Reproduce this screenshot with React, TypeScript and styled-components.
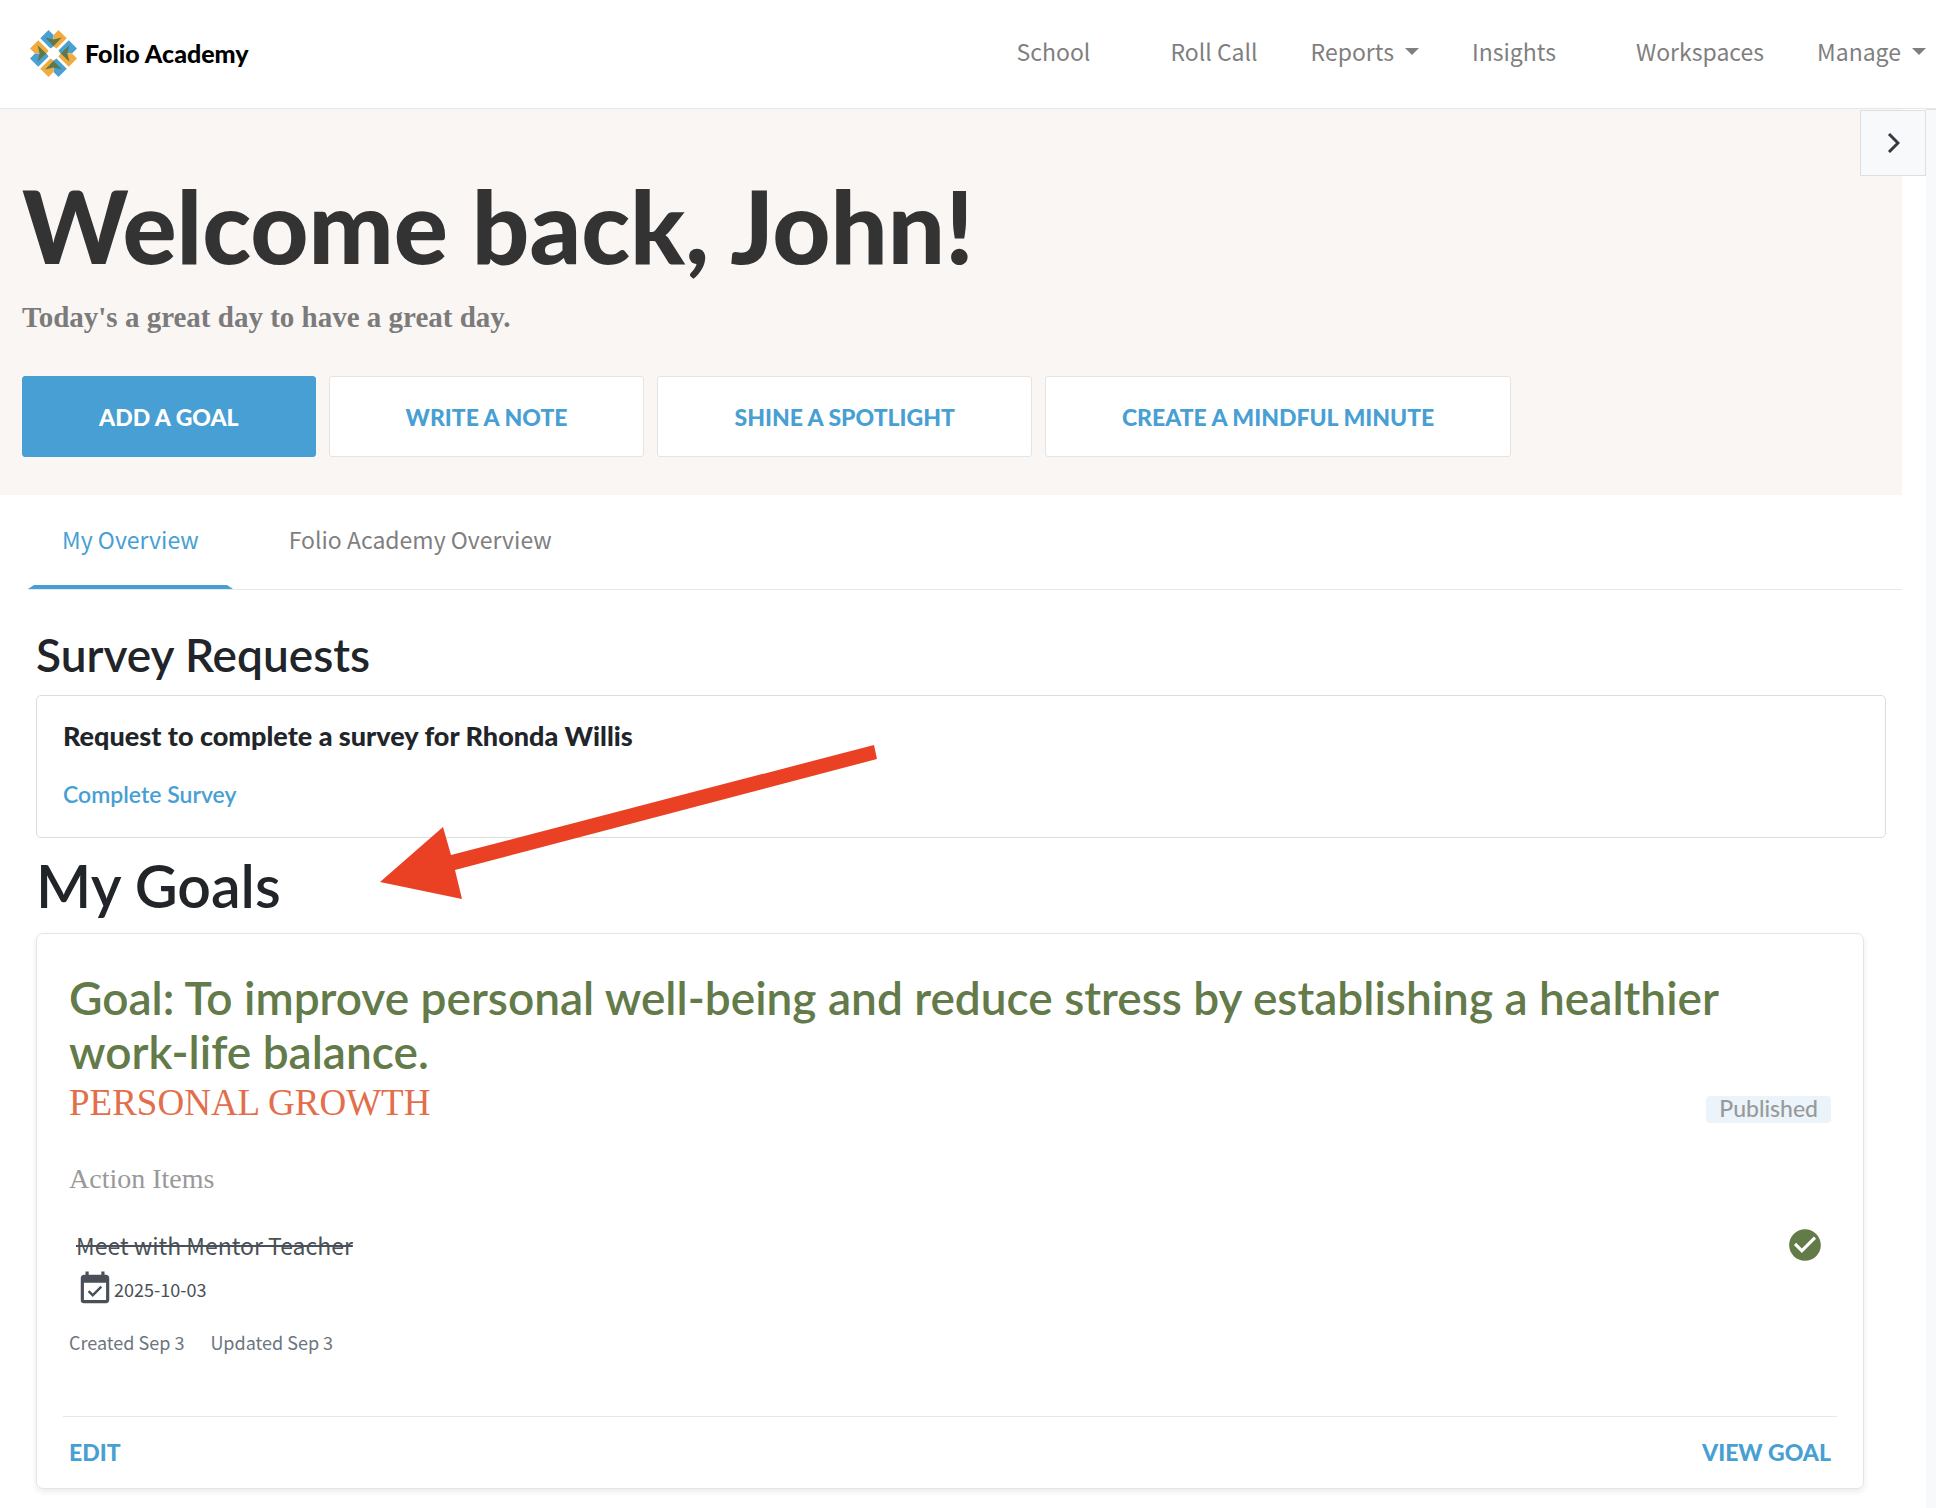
import React from "react";
import styled, { createGlobalStyle, css } from "styled-components";
import { MdCheckCircle, MdEventAvailable } from "react-icons/md";

const color = {
  blue: "#489fd3",
  green: "#637a49",
  orange: "#e26e4c",
  ink: "#212529",
  grey: "#7f7f7f",
  line: "#e6e7e9",
};

const font = {
  ui: "'Noto Sans CJK SC', 'Noto Sans', sans-serif",
  display: "Lato, sans-serif",
  serif: "'Liberation Serif', serif",
};

const GlobalStyle = createGlobalStyle`
  *, *::before, *::after { box-sizing: border-box; }
  body { margin: 0; background: #fff; color: ${color.ink}; font-family: ${font.ui}; }
  h1, h2, h3, p { margin: 0; }
  a { text-decoration: none; }
  button { border: 0; background: none; padding: 0; cursor: pointer; }
  svg { display: block; }
`;

const Page = styled.div`
  display: flex;
  flex-direction: column;
  min-height: 100vh;
`;

const Header = styled.header`
  display: flex;
  align-items: center;
  justify-content: space-between;
  height: 109px;
  padding: 0 10px 2px 30px;
  border-bottom: 1px solid ${color.line};
`;

const Brand = styled.a`
  display: flex;
  align-items: center;
  gap: 8px;
  color: #000;
  font: 900 25px/30px ${font.display};
`;

const Nav = styled.nav`
  display: flex;
  align-items: center;
  gap: 53px;
  padding-bottom: 4px;
`;

const navText = css`
  color: ${color.grey};
  font: 400 23px/34px ${font.ui};
`;

const NavLink = styled.a<{ $wide?: boolean }>`
  ${navText}
  margin-right: ${(p) => (p.$wide ? 27 : 0)}px;
`;

const NavMenu = styled.button`
  ${navText}
  display: flex;
  align-items: center;
  gap: 11px;

  &::after {
    content: "";
    border: 7px solid transparent;
    border-top-color: currentColor;
    border-bottom: 0;
  }
`;

const Body = styled.div`
  position: relative;
  display: flex;
  flex: 1;
`;

const Main = styled.main`
  flex: 1;
  min-width: 0;
  padding: 0 24px 19px 0;
`;

const Rail = styled.aside`
  width: 10px;
  border-top: 1px solid #dee2e6;
  background: #f8f9fb;
`;

const RailToggle = styled.button`
  position: absolute;
  top: 1px;
  right: 10px;
  display: grid;
  place-items: center;
  width: 66px;
  height: 66px;
  border: 1px solid #dbe0e5;
  background: #f8f9fb;
  color: #343a40;
`;

const Hero = styled.section`
  padding: 56px 22px 38px;
  background: #faf6f4;
`;

const Welcome = styled.h1`
  color: #333;
  font: 900 101px/120px ${font.display};
`;

const Tagline = styled.p`
  margin-top: 10px;
  color: #7b7b7b;
  font: 700 29px/44px ${font.serif};
`;

const Actions = styled.div`
  display: flex;
  flex-wrap: wrap;
  gap: 13px;
  margin-top: 37px;
`;

const ActionButton = styled.button<{ $primary?: boolean }>`
  height: 81px;
  padding: 0 76px;
  border: 1px solid ${(p) => (p.$primary ? color.blue : "#e4e4e4")};
  border-radius: 3px;
  background: ${(p) => (p.$primary ? color.blue : "#fff")};
  color: ${(p) => (p.$primary ? "#fff" : color.blue)};
  font: 900 23px/28px ${font.display};
`;

const Tabs = styled.div`
  display: flex;
  gap: 22px;
  margin-left: 28px;
  border-bottom: 1px solid ${color.line};
`;

const Tab = styled.button<{ $active?: boolean }>`
  height: 94px;
  padding: 0 28px 2px;
  border: solid transparent;
  border-width: 0 6px 4px;
  border-bottom-color: ${(p) => (p.$active ? color.blue : "transparent")};
  color: ${(p) => (p.$active ? color.blue : color.grey)};
  font: 400 23px/34px ${font.ui};
`;

const Panel = styled.div`
  display: flex;
  flex-direction: column;
  padding: 37px 16px 0 36px;
`;

const SurveyTitle = styled.h2`
  margin-bottom: 13px;
  font: 600 46px/55px ${font.display};
`;

const GoalsTitle = styled.h2`
  margin: 13px 0 12px;
  font: 600 59px/70px ${font.display};
`;

const SurveyCard = styled.article`
  display: flex;
  flex-direction: column;
  align-items: flex-start;
  gap: 28px;
  padding: 24px 26px 29px;
  border: 1px solid #dcdddf;
  border-radius: 5px;
`;

const SurveyName = styled.h3`
  font: 900 27px/32px ${font.display};
`;

const SurveyLink = styled.a`
  color: ${color.blue};
  font: 600 23px/28px ${font.display};
`;

const GoalCard = styled.article`
  margin-right: 22px;
  padding: 37px 26px 0;
  border: 1px solid #e3e4e5;
  border-radius: 7px;
  box-shadow: 0 3px 6px rgba(0, 0, 0, 0.08);
`;

const GoalBody = styled.div`
  padding: 0 6px 61px;
`;

const GoalTitle = styled.h3`
  color: ${color.green};
  font: 600 46px/54px ${font.display};
`;

const CategoryRow = styled.div`
  display: flex;
  align-items: flex-end;
  justify-content: space-between;
  margin-top: 4px;
`;

const Category = styled.p`
  color: ${color.orange};
  font: 400 37px/40px ${font.serif};
`;

const Status = styled.span`
  padding: 0 13px 3px;
  border-radius: 4px;
  background: #ebf4fa;
  color: #999;
  font: 500 23px/24px ${font.display};
`;

const ItemsLabel = styled.p`
  margin-top: 39px;
  color: #999;
  font: 400 28px/34px ${font.serif};
`;

const Item = styled.div`
  display: flex;
  align-items: center;
  justify-content: space-between;
  height: 38px;
  margin-top: 30px;
  padding: 0 7px;
  color: #495057;
  font-size: 23px;
  line-height: 34px;
`;

const Done = styled.span`
  color: ${color.green};
`;

const DueDate = styled.div`
  display: flex;
  align-items: center;
  margin-top: 6px;
  padding-left: 7px;
  color: #495057;
  font-size: 18px;
  line-height: 28px;
`;

const Stamps = styled.p`
  display: flex;
  gap: 26px;
  margin-top: 21px;
  color: #6c757d;
  font-size: 18px;
  line-height: 26px;
`;

const GoalFooter = styled.footer`
  display: flex;
  justify-content: space-between;
  padding: 21px 6px 22px;
  border-top: 1px solid ${color.line};
`;

const FooterLink = styled.a`
  color: ${color.blue};
  font: 900 23px/28px ${font.display};
`;

const Pointer = styled.svg`
  position: absolute;
  top: 636px;
  left: 380px;
  pointer-events: none;
`;

const LogoMark = () => (
  <svg width="47" height="47" viewBox="12 12 142 142" aria-hidden="true">
    {[0, 90, 180, 270].map((turn) => (
      <g key={turn} transform={`rotate(${turn} 83 83)`}>
        <path d="M68 12 43 37 74 68 83 62V27Z" fill="#48a0d4" />
        <path d="M98 12 123 37 92 68 83 62V27Z" fill="#f0ab41" />
        <path d="M58 35 83 41 108 35 83 61Z" fill="#5f7847" />
      </g>
    ))}
  </svg>
);

export default function App() {
  return (
    <Page>
      <GlobalStyle />
      <Header>
        <Brand href="#">
          <LogoMark />
          Folio Academy
        </Brand>
        <Nav>
          <NavLink href="#" $wide>School</NavLink>
          <NavLink href="#">Roll Call</NavLink>
          <NavMenu type="button">Reports</NavMenu>
          <NavLink href="#" $wide>Insights</NavLink>
          <NavLink href="#">Workspaces</NavLink>
          <NavMenu type="button">Manage</NavMenu>
        </Nav>
      </Header>

      <Body>
        <Main>
          <Hero>
            <Welcome>Welcome back, John!</Welcome>
            <Tagline>Today's a great day to have a great day.</Tagline>
            <Actions>
              <ActionButton type="button" $primary>ADD A GOAL</ActionButton>
              <ActionButton type="button">WRITE A NOTE</ActionButton>
              <ActionButton type="button">SHINE A SPOTLIGHT</ActionButton>
              <ActionButton type="button">CREATE A MINDFUL MINUTE</ActionButton>
            </Actions>
          </Hero>

          <Tabs role="tablist">
            <Tab type="button" role="tab" aria-selected="true" $active>My Overview</Tab>
            <Tab type="button" role="tab" aria-selected="false">Folio Academy Overview</Tab>
          </Tabs>

          <Panel role="tabpanel">
            <SurveyTitle>Survey Requests</SurveyTitle>
            <SurveyCard>
              <SurveyName>Request to complete a survey for Rhonda Willis</SurveyName>
              <SurveyLink href="#">Complete Survey</SurveyLink>
            </SurveyCard>

            <GoalsTitle>My Goals</GoalsTitle>
            <GoalCard>
              <GoalBody>
                <GoalTitle>
                  Goal: To improve personal well-being and reduce stress by establishing a healthier work-life balance.
                </GoalTitle>
                <CategoryRow>
                  <Category>PERSONAL GROWTH</Category>
                  <Status>Published</Status>
                </CategoryRow>
                <ItemsLabel>Action Items</ItemsLabel>
                <Item>
                  <s>Meet with Mentor Teacher</s>
                  <Done>
                    <MdCheckCircle size={38} />
                  </Done>
                </Item>
                <DueDate>
                  <MdEventAvailable size={38} />
                  <time dateTime="2025-10-03">2025-10-03</time>
                </DueDate>
                <Stamps>
                  <span>Created Sep 3</span>
                  <span>Updated Sep 3</span>
                </Stamps>
              </GoalBody>
              <GoalFooter>
                <FooterLink href="#">EDIT</FooterLink>
                <FooterLink href="#">VIEW GOAL</FooterLink>
              </GoalFooter>
            </GoalCard>
          </Panel>
        </Main>
        <Rail />
        <RailToggle type="button" aria-label="Open side panel">
          <svg width="14" height="20" viewBox="0 0 14 20" fill="none" stroke="currentColor" strokeWidth="3">
            <path d="M3 1 12 10 3 19" />
          </svg>
        </RailToggle>
        <Pointer width="498" height="155" viewBox="0 0 498 155" fill="#ea4125" aria-hidden="true">
          <path d="M0 137 63 82 71 110 494 0 497 14 75 125 82 154Z" />
        </Pointer>
      </Body>
    </Page>
  );
}
